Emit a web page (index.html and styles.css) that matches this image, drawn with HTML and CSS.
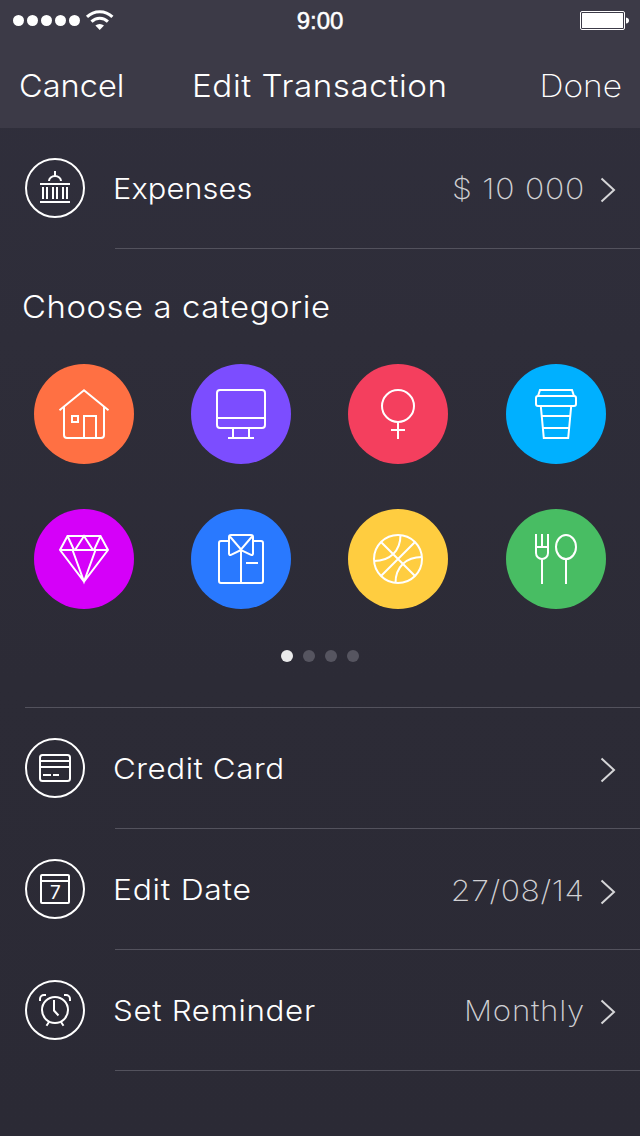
FILE: index.html
```html
<!DOCTYPE html>
<html lang="en">
<head>
<meta charset="utf-8">
<title>Edit Transaction</title>
<link rel="stylesheet" href="styles.css">
</head>
<body>
<div class="screen">
  <header class="header">
    <div class="status">
      <svg class="signal" width="104" height="24" viewBox="0 0 104 24">
        <g fill="#fff"><circle cx="6.5" cy="12.5" r="5.5"/><circle cx="20.5" cy="12.5" r="5.5"/><circle cx="34.5" cy="12.5" r="5.5"/><circle cx="48.5" cy="12.5" r="5.5"/><circle cx="62.5" cy="12.5" r="5.5"/><path d="M83.4 17.6a6.3 6.3 0 0 1 8.6 0L87.700 22z"/></g>
        <g fill="none" stroke="#fff" stroke-width="3"><path d="M75 8.900a18 18 0 0 1 25.400 0"/><path d="M79.500 13.600a11.700 11.700 0 0 1 16.400 0"/></g>
      </svg>
      <span class="clock">9:00</span>
      <svg class="battery" width="50" height="20" viewBox="0 0 50 20">
        <rect x=".5" y=".5" width="44" height="18" rx="1.500" fill="none" stroke="#fff"/>
        <rect x="2" y="2" width="41" height="15" rx=".5" fill="#fff"/>
        <path d="M46 6.500q3 .5 3 3t-3 3z" fill="#fff"/>
      </svg>
    </div>
    <nav class="nav">
      <span class="cancel">Cancel</span>
      <h1 class="title">Edit Transaction</h1>
      <span class="done">Done</span>
    </nav>
  </header>

  <div class="row">
    <svg class="badge" viewBox="0 0 60 60"><circle cx="30" cy="30" r="29"/><path d="M15 26h30M15 44h30M18 29v12M22 29v12M28 29v12M32 29v12M38 29v12M42 29v12M24 23a6 5 0 0 1 12 0M30 13v5"/></svg>
    <div class="body">
      <span class="label expenses">Expenses</span>
      <span class="value amount">$ 10 000</span>
      <svg class="chevron" viewBox="0 0 16 26"><path d="M1.500 1.500 14 13 1.500 24.500"/></svg>
    </div>
  </div>

  <section class="categories">
    <h2 class="heading">Choose a categorie</h2>
    <div class="grid">
      <svg class="cat house" viewBox="0 0 100 100"><path d="M25.500 46.200 50 26.200 74.500 46.200M30 43v28a3 3 0 0 0 3 3h34a3 3 0 0 0 3-3V43M38 52h6v6h-6zM50 74V52h12v22"/></svg>
      <svg class="cat monitor" viewBox="0 0 100 100"><rect x="26" y="26" width="48" height="38" rx="3"/><path d="M26 54h48M42 64v10M58 64v10M37 74h26"/></svg>
      <svg class="cat female" viewBox="0 0 100 100"><circle cx="50" cy="42" r="16"/><path d="M50 58v17M43 66h14"/></svg>
      <svg class="cat coffee" viewBox="0 0 100 100"><path d="M32 32l2-6h32l2 6M34.800 42l3 32h24.400l3-32M36 52h28M37 64h26"/><rect x="30" y="32" width="40" height="10" rx="2"/></svg>
      <svg class="cat gem" viewBox="0 0 100 100"><path d="M33.500 27h33L74 41 50 72.500 26 41zM26 41h48M33.500 27l6.500 14M60 41l6.500-14M41 41l9-14 9 14M38.500 41 50 72.500 61.500 41"/></svg>
      <svg class="cat shirt" viewBox="0 0 100 100"><path d="M38 32h-8a2 2 0 0 0-2 2v38a2 2 0 0 0 2 2h40a2 2 0 0 0 2-2V34a2 2 0 0 0-2-2h-8M50 41v33M55 54h12M50 41l-10 4.800q-2 .7-2-1.300V28q0-2 2-2h20q2 0 2 2v16.500q0 2-2 1.300zM38.500 27 50 40.500 61.500 27"/></svg>
      <svg class="cat ball" viewBox="0 0 100 100"><circle cx="50" cy="50" r="24"/><path d="M33 33l34 34M67 33 33 67M52.500 26C52.500 42 42 52 26 52M74 48C58 48 47.500 58 47.500 74"/></svg>
      <svg class="cat food" viewBox="0 0 100 100"><path d="M30 25v19a6 6 0 0 0 12 0V25M36 25v13M30 38h12M36 50v25M60 50v25"/><ellipse cx="60" cy="38" rx="10" ry="12"/></svg>
    </div>
    <div class="pager"><i class="dot on"></i><i class="dot"></i><i class="dot"></i><i class="dot"></i></div>
  </section>

  <div class="row">
    <svg class="badge" viewBox="0 0 60 60"><circle cx="30" cy="30" r="29"/><rect x="15" y="17" width="30" height="26" rx="2.500"/><path d="M15 23h30M15 29h30M18 37h8M28 37h6"/></svg>
    <div class="body">
      <span class="label card">Credit Card</span>
      <svg class="chevron" viewBox="0 0 16 26"><path d="M1.500 1.500 14 13 1.500 24.500"/></svg>
    </div>
  </div>
  <div class="row">
    <svg class="badge" viewBox="0 0 60 60"><circle cx="30" cy="30" r="29"/><rect x="16" y="16" width="28" height="28" rx="1"/><path d="M16 22h28"/><text class="day" x="30.500" y="40" text-anchor="middle">7</text></svg>
    <div class="body">
      <span class="label edit-date">Edit Date</span>
      <span class="value date">27/08/14</span>
      <svg class="chevron low" viewBox="0 0 16 26"><path d="M1.500 1.500 14 13 1.500 24.500"/></svg>
    </div>
  </div>
  <div class="row">
    <svg class="badge" viewBox="0 0 60 60"><circle cx="30" cy="30" r="29"/><circle cx="30" cy="30" r="13"/><path d="M29 20v10.500l4.500 5M24 42l-2.500 3.700M36 42l2.500 3.700M15 21v-2a4 4 0 0 1 4-4h2M45 21v-2a4 4 0 0 0-4-4h-2"/></svg>
    <div class="body">
      <span class="label reminder">Set Reminder</span>
      <span class="value monthly">Monthly</span>
      <svg class="chevron" viewBox="0 0 16 26"><path d="M1.500 1.500 14 13 1.500 24.500"/></svg>
    </div>
  </div>
</div>
</body>
</html>
```
FILE: styles.css
```css
* { box-sizing: border-box; }
body { margin: 0; }
.screen {
  width: 640px;
  height: 1136px;
  overflow: hidden;
  background: linear-gradient(#302f3c, #2c2b36 60%, #2b2a35);
  color: #fff;
  font-family: Inter, Lato, "Open Sans", sans-serif;
  font-weight: 300;
}
.header { height: 128px; background: #3c3a47; }
.status {
  height: 42px;
  padding: 0 10px 0 12px;
  display: grid;
  grid-template-columns: 1fr auto 1fr;
  align-items: start;
}
.signal { margin-top: 8px; }
.battery { margin-top: 11px; justify-self: end; }
.clock {
  margin: 0 1px 0 -1px;
  font: 400 24px/42px "Liberation Sans", sans-serif;
  -webkit-text-stroke: 0.5px #fff;
}
.nav {
  height: 86px;
  display: grid;
  grid-template-columns: 174px 1fr 175px;
  padding: 0 18px 0 19px;
  line-height: 88px;
  font-size: 31px;
}
/* Slightly extended letterforms for the interface type */
.cancel, .title, .label, .heading { transform-origin: left center; }
.done, .value { transform-origin: right center; }
.cancel { transform: scaleX(1.05); }
.title {
  margin: 0 0 0 -1px;
  font-size: 31px;
  font-weight: 300;
  white-space: nowrap;
  letter-spacing: 0.55px;
  transform: scaleX(1.07);
}
.done { text-align: right; font-weight: 200; transform: scaleX(1.08); }
.row { height: 121px; padding-left: 25px; display: flex; }
.badge { flex: none; width: 60px; height: 60px; margin: 30px 30px 0 0; }
.badge, .cat, .chevron { fill: none; stroke: #fff; stroke-width: 2; }
.day { font: 400 19px Inter, sans-serif; fill: #fff; stroke: none; }
.body {
  flex: 1;
  display: flex;
  align-items: flex-start;
  border-bottom: 1px solid #53525d;
  padding-right: 24px;
  line-height: 122px;
}
.label { font-size: 29px; white-space: nowrap; margin-left: -2px; height: 120px; }
.value { font-size: 29px; font-weight: 200; color: #d0d0d3; margin: 0 -1px 0 auto; white-space: nowrap; height: 120px; }
.expenses { letter-spacing: 0.1px; transform: scaleX(1.06); }
.amount { letter-spacing: 0.7px; transform: scaleX(1.1); }
.card { letter-spacing: 0.5px; transform: scaleX(1.08); }
.edit-date { letter-spacing: 0.65px; transform: scaleX(1.1); }
.date { letter-spacing: 0.55px; line-height: 124px; transform: scaleX(1.1); }
.reminder { letter-spacing: 0.6px; transform: scaleX(1.08); }
.monthly { letter-spacing: 0.65px; transform: scaleX(1.08); }
.chevron { width: 16px; height: 26px; margin: 49px 0 0 16px; stroke: #d5d5d7; }
.chevron.low { margin-top: 50px; }
.card + .chevron { margin-left: auto; }
.categories { height: 459px; padding-top: 34px; }
.heading {
  margin: 0 0 33px 22px;
  font-size: 31px;
  line-height: 48px;
  font-weight: 300;
  white-space: nowrap;
  letter-spacing: 0.55px;
  transform: scaleX(1.06);
}
.grid {
  display: grid;
  grid-template-columns: 157px 157px 158px 100px;
  row-gap: 45px;
  padding-left: 34px;
}
.cat { width: 100px; height: 100px; border-radius: 50%; }
.house { background: #ff7043; }
.monitor { background: #7c4dff; }
.female { background: #f43f5e; }
.coffee { background: #00b0ff; }
.gem { background: #d500f9; }
.shirt { background: #2979ff; }
.ball { background: #ffcd40; }
.food { background: #48bd63; }
.pager { display: flex; justify-content: center; gap: 10px; margin-top: 41px; }
.dot { width: 12px; height: 12px; border-radius: 50%; background: #565560; }
.dot.on { background: #eaeaeb; }
.categories::after {
  content: "";
  display: block;
  height: 1px;
  margin: 45px 0 0 25px;
  background: #53525d;
}
```
